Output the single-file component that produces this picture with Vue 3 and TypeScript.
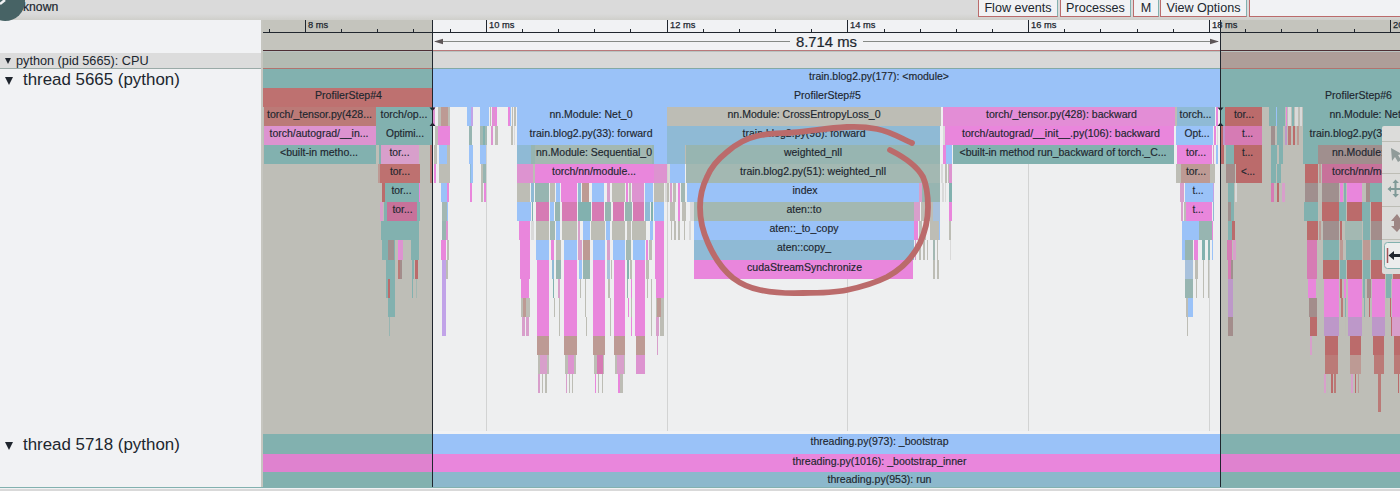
<script setup lang="ts">
interface Bar { x: number; w: number; y: number; h: number; fill: string }
interface Label { x: number; y: number; w: number; text: string }

const palette: Record<string, string> = {
  B: '#9ac2f8', K: '#e986dc', T: '#82b1af', G: '#bdbdb5', R: '#bb6b6b', L: '#d9d9d9', W: '#f1f2f4',
  BT: '#8fbad5', GT: '#a3b8b2', TG: '#97b5b1', KG: '#d89fcb', KR: '#d67bb4', RK: '#c7729a', GR: '#bd9a94',
  RG: '#bb7a77', RT: '#a38d8b', KT: '#bd98c9', KB: '#c1a3e8', PG: '#dd93d0', RD: '#be7170', BG: '#a8c1dc', TR: '#a08f8e', PL: '#e38dd6',
}

const TOP = 69
const ROW = 19.05

// One entry per stack depth: "start end colour" triples.
const depths: string[] = [
  '263 433 T,433 1220 B,1221 1400 T',
  '263 433 RD,433 1220 B,1221 1400 T',
  '264 376 RG,376 432 T,432 435 PG,438 450 G,441 448 GR,467 473 B,471 473 KB,480 489 B,490 491 G,492 497 K,493 495 PG,508 510 K,510 511 B,512 513 G,514 515.5 G,517 667 B,667 941 G,943 1175 PL,1175 1177 G,1177 1215 BT,1216 1218 K,1221 1225 T,1225 1262 R,1269 1285 T,1276 1277 B,1286 1287 K,1288 1291 L,1292 1294 T,1295 1298 L,1300 1302 L,1303 1400 T',
  '264 376 PG,376 432 T,435 438 G,438 450 K,469 472 TG,480 487 GT,483 485 T,491 493 PG,495 497.5 G,511 512.5 G,513.5 515 L,517 667 B,667 940 BT,943 944.5 L,945 1174 K,1176 1213 B,1214 1216 K,1217 1218 L,1221 1223 R,1223 1225 KT,1225 1262 KR,1271 1275 TR,1277 1283 T,1285 1287 KT,1288 1291 RG,1293 1295 R,1297 1299 GR,1303 1400 T',
  '264 376 T,379 381 T,381 419 KG,430 432 RG,434 437 G,439 447 B,447 450 G,469 473 B,480 486 B,517 531 BT,531 654 TG,535 652 GT,654 667 B,667 685 BT,685 686 G,686 940 TG,943 946 K,946 952 B,953 1174 T,1177 1212 K,1213 1214 KG,1216 1218 B,1221 1224 R,1226 1234 T,1234 1262 R,1271 1277 T,1279 1283 T,1303 1318 T,1318 1400 TR',
  '378 380 GR,380 420 RD,430 432 RG,434 436 K,439 450 G,469.5 471 BT,471 473 B,481 483 G,483 486 TG,517 533 PG,533 535 G,535 654 K,654 667 PG,668 670 L,670 685 B,686 940 GT,941 943 L,945 946.5 G,948 949 G,949 952 PG,1176 1215 G,1181 1210 GR,1225.5 1235 RT,1236 1262 R,1271 1276 T,1277 1281 T,1305 1318 R,1319 1321 GR,1322 1400 RK',
  '382 385 R,385 419 T,419 420 K,441 447 B,447 449 K,470 472 K,481 483 G,484 486 K,517 530 G,531 534 BT,535 549 TG,550 555 G,556 560 B,561 577 K,578 581 BT,582 589 GR,592 604 B,607 610 KG,612 625 G,626 628 K,629 631 G,632 644 PG,645 653 B,654 664 G,665 667 L,667 669 G,670 672 KG,673 676 G,678 680 K,681 685 GT,687 919 B,919 922 KG,922 940 TG,942 943.5 L,945 946 L,949 952 T,1180 1184 KG,1185 1213 B,1213 1214 KB,1228 1234 T,1235 1236.5 L,1271 1274 KR,1277 1279 R,1282 1285 KG,1305 1318 TR,1319 1320 G,1322 1339 TR,1340 1343 K,1344 1346 T,1347 1362 K,1366 1370 RT,1370 1400 T',
  '380 383 KG,384 387 T,387 417 RK,417 420 T,442 447 GT,447 448 B,517 531 B,532 533 T,536 549 KR,550 554 B,555 560 TG,562 577 KR,578 591 T,592 604 KR,605 611 TG,613 624 KR,625 632 TG,633 644 KR,645 650 BT,651 653 T,654 664 B,670 675 G,678 680 K,682 686 G,690 694 L,694 914 GT,914 920 KG,921 933 G,933 940 BG,949 952 K,1181 1183 KG,1184 1186 G,1186 1212 K,1213 1214 BT,1228 1231 TR,1231 1234 T,1304 1318 T,1319 1321 G,1322 1339 R,1339 1346 T,1347 1362 R,1362 1370 T,1371 1385 R,1385 1400 T',
  '381 419 T,442 446 TG,446 448 PG,519 530 K,531 534 L,536 549 G,550 555 GT,556 560 B,562 577 G,578 580 KG,583 590 B,591 605 G,606 610 B,612 625 G,627 631 G,632 646 G,650 653 B,655 664 K,671 672 G,674 675.5 G,678 679.5 G,684 685 G,689 691 L,694 914 B,914 918 K,919 922 G,924 926 G,930 939 G,939 940 B,949 950.5 G,1182 1199 B,1199 1212 TG,1212 1213 K,1228 1232 T,1232 1235 R,1307 1318 R,1319 1321 GR,1323 1339 TR,1340 1342 R,1345 1362 GT,1363 1370 T,1371 1384 RT',
  '382 395 T,388 394 TR,398 400 K,400 403 PG,411 419 T,441 446 K,447 449 G,520 530 K,536 549 B,551 554 K,556 561 G,564 577 B,578 582 KG,583 590 GR,593 605 B,607 610 KG,613 625 B,626 631 GT,633 645 B,646 648 K,649 652 G,655 664 K,694 914 BT,915 916 KG,919 921 G,923 924.5 G,927 928 G,933 935 GT,937 938 G,950 951 L,1182 1185 B,1185 1193 TG,1194 1198 K,1202 1205 T,1208 1210 T,1212 1213 B,1227 1232 KR,1233 1236 KG,1307 1317 KR,1323 1339 T,1340 1343 GR,1346 1362 T,1363 1370 GR,1371 1384 T',
  '386 395 T,398 399.5 RG,400 401.5 RT,412 414 T,415 418 R,442 446 KB,446 448 G,520 530 K,537 549 K,552 554 BT,556 561 TG,564 577 K,579 582 B,583 590 TG,593 605 K,607 610 BG,611 612 G,614 625 K,627 629 T,630 632 G,635 645 K,646 649 G,655 664 K,694 913 K,933 934.5 G,937 939 G,1185 1193 BG,1195 1198 G,1203 1204 G,1208 1209 G,1228 1231 KR,1231 1233 TR,1307 1317 KR,1323 1339 R,1340 1346 T,1347 1362 R,1363 1370 T,1371 1385 R,1386 1392 T,1393 1400 R',
  '386 395 T,388 390 R,412 413 T,416 417 GT,442 446 KB,521 529 K,537 549 K,553 554 T,558 560 KG,564 577 K,580 581 G,585 586 G,593 605 K,608 610 G,614 625 K,627 628 TG,631 632 K,635 645 K,647 648 G,651 652 G,656 664 K,1185 1193 TG,1196 1197 G,1203 1204 G,1208 1209 G,1228 1233 KT,1308 1316 K,1324 1339 K,1340 1342 R,1344 1346 K,1348 1362 K,1363 1365 T,1367 1371 RT,1372 1385 K,1386 1391 T,1392 1400 K',
  '388 395 T,442 446 KB,521 530 G,523 526 GR,537 549 K,554 555 G,559 560 G,564 577 K,585 586 G,593 605 K,610 611 G,614 625 K,628 629 K,631 632 G,635 645 K,651 652 G,656 664 G,657 661 GR,1186 1188 G,1188 1193 B,1228 1233 KT,1309 1317 RT,1324 1339 K,1341 1343 RG,1345 1346 T,1348 1362 K,1364 1365 T,1369 1370 R,1372 1385 K,1386 1388 G,1390 1391 R,1392 1400 K',
  '389 390 TG,442 446 KB,522 525 KG,526 529 KG,537 549 K,559 560 G,564 577 K,586 587 G,593 605 K,610 611 G,614 625 K,631 632 K,635 645 K,651 652 G,656 659 KG,660 664 G,1187 1188 G,1228 1233 RT,1310 1317 R,1324 1339 KT,1345 1346 G,1348 1362 KT,1372 1385 KT,1391 1392 R,1392 1400 KG',
  '537 549 GR,564 577 GR,593 605 GR,614 625 GR,636 645 GR,657 658 KG,1310 1312 KG,1325 1338 R,1350 1361 R,1373 1384 R,1394 1400 R',
  '538 549 G,540 547 KG,565 576 G,568 574 PG,594 604 G,597 603 KR,615 625 G,617 624 KG,636 645 PG,1325 1338 RG,1350 1361 GR,1374 1384 RG,1394 1400 RG',
  '538 539.5 KG,542 543 G,545 547 G,566 567 KG,569 570 G,572 573 G,595 596 K,598 599 G,602 603 G,618 620 K,620 623 G,1324 1326 KG,1327 1328 G,1331 1332.5 R,1334 1336 RG,1351 1353 KG,1355 1356 R,1358 1359 GR,1378 1381 RG,1398 1399 R',
  '1378 1381 RG',
]

const bars: Bar[] = depths.flatMap((line, depth) =>
  line.split(',').map((entry) => {
    const [a, b, c] = entry.split(' ')
    const y = Math.round(TOP + depth * ROW)
    return { x: +a, w: +b - +a, y, h: Math.round(TOP + (depth + 1) * ROW) - y, fill: palette[c] }
  }),
)

const label = (x: number, depth: number, w: number, text: string): Label =>
  ({ x, y: Math.round(TOP + depth * ROW) + 11, w, text })

const labels: Label[] = [
  label(879, 0, 140, 'train.blog2.py(177): <module>'),
  label(348.5, 1, 67, 'ProfilerStep#4'),
  label(827.5, 1, 67, 'ProfilerStep#5'),
  label(1358.5, 1, 67, 'ProfilerStep#6'),
  label(319.5, 2, 105, 'torch/_tensor.py(428...'),
  label(404, 2, 47, 'torch/op...'),
  label(591, 2, 83, 'nn.Module: Net_0'),
  label(804, 2, 153, 'nn.Module: CrossEntropyLoss_0'),
  label(1061.5, 2, 151, 'torch/_tensor.py(428): backward'),
  label(1195.5, 2, 32, 'torch...'),
  label(1244, 2, 20, 'tor...'),
  label(1371, 2, 83, 'nn.Module: Net_0'),
  label(319, 3, 99, 'torch/autograd/__in...'),
  label(405, 3, 38, 'Optimi...'),
  label(591, 3, 123, 'train.blog2.py(33): forward'),
  label(804, 3, 123, 'train.blog2.py(98): forward'),
  label(1061, 3, 198, 'torch/autograd/__init__.py(106): backward'),
  label(1197, 3, 25, 'Opt...'),
  label(1247.5, 3, 11, 't...'),
  label(1371, 3, 123, 'train.blog2.py(33): forward'),
  label(319, 4, 78, '<built-in metho...'),
  label(399.5, 4, 20, 'tor...'),
  label(594, 4, 116, 'nn.Module: Sequential_0'),
  label(813, 4, 58, 'weighted_nll'),
  label(1063, 4, 207, '<built-in method run_backward of torch._C...'),
  label(1196, 4, 20, 'tor...'),
  label(1247.5, 4, 11, 't...'),
  label(1390, 4, 116, 'nn.Module: Sequential_0'),
  label(400, 5, 20, 'tor...'),
  label(594, 5, 84, 'torch/nn/module...'),
  label(813, 5, 146, 'train.blog2.py(51): weighted_nll'),
  label(1196, 5, 20, 'tor...'),
  label(1248, 5, 14, '<...'),
  label(1374, 5, 84, 'torch/nn/module...'),
  label(401.5, 6, 20, 'tor...'),
  label(805, 6, 25, 'index'),
  label(1198, 6, 11, 't...'),
  label(402.5, 7, 20, 'tor...'),
  label(804, 7, 35, 'aten::to'),
  label(1198, 7, 11, 't...'),
  label(804, 8, 69, 'aten::_to_copy'),
  label(804, 9, 54, 'aten::copy_'),
  label(804.5, 10, 115, 'cudaStreamSynchronize'),
  { x: 879.5, y: 445, w: 138, text: 'threading.py(973): _bootstrap' },
  { x: 879.5, y: 465, w: 174, text: 'threading.py(1016): _bootstrap_inner' },
  { x: 879.5, y: 483, w: 104, text: 'threading.py(953): run' },
]

const majors = [0, 1, 2, 3, 4, 5, 6].map((i) => ({ x: Math.round(306 + i * 180.8), text: `${8 + i * 2} ms` }))
const minors = Array.from({ length: 31 }, (_, i) => Math.round(269.8 + i * 36.16)).filter(
  (x) => !majors.some((m) => Math.abs(m.x - x) < 4),
)
const buttons = ['Flow events', 'Processes', 'M', 'View Options']
</script>

<template>
  <div class="viewer">
    <header class="topbar">
      <svg class="logo" width="27" height="22" viewBox="0 0 27 22">
        <circle cx="5" cy="1" r="20" fill="#476365" />
        <path d="M0 4L5 0" stroke="#f1f2f4" stroke-width="2.5" />
      </svg>
      <span class="title">known</span>
      <nav class="actions">
        <button v-for="(b, i) in buttons" :key="b" :class="'b' + i">{{ b }}</button>
        <span class="search"></span>
      </nav>
    </header>

    <main class="body">
      <aside class="names">
        <div class="corner"></div>
        <div class="process"><i></i><span>python (pid 5665): CPU</span></div>
        <div class="thread first"><i></i><span>thread 5665 (python)</span></div>
        <div class="thread"><i></i><span>thread 5718 (python)</span></div>
      </aside>

      <svg class="timeline" width="1139" height="468" viewBox="261 20 1139 468">
        <rect x="261" y="20" width="1139" height="468" fill="#f1f2f4" />
        <rect x="261" y="20" width="2" height="468" fill="#c6c6c0" />
        <rect x="263" y="20" width="170" height="32" fill="#c4c4bd" />
        <rect x="1221" y="20" width="179" height="32" fill="#c4c4bd" />

        <rect x="263" y="52" width="170" height="16" fill="#b3bbb3" />
        <rect x="433" y="52" width="788" height="16" fill="#d8d8d7" />
        <rect x="1221" y="52" width="179" height="16" fill="#ae9e99" />

        <rect x="263" y="69" width="170" height="365" fill="#bebeb7" />
        <rect x="433" y="69" width="788" height="362" fill="#eeeff0" />
        <rect x="1221" y="69" width="179" height="365" fill="#bebeb7" />
        <rect v-for="m in majors.slice(1, 6)" :key="m.x" :x="m.x - 1" y="69" width="1" height="362" fill="#d2d3d3" />

        <g shape-rendering="crispEdges">
          <rect v-for="(b, i) in bars" :key="i" :x="b.x" :y="b.y" :width="b.w" :height="b.h" :fill="b.fill" />
          <rect x="263" y="434" width="1137" height="20" fill="#82b1af" />
          <rect x="433" y="434" width="787" height="20" fill="#9ac2f8" />
          <rect x="263" y="454" width="1137" height="18" fill="#df82cf" />
          <rect x="433" y="454" width="787" height="18" fill="#e986dc" />
          <rect x="263" y="472" width="1137" height="15" fill="#82b1af" />
          <rect x="433" y="472" width="787" height="15" fill="#8cb8cc" />
          <rect x="261" y="487" width="1139" height="1" fill="#82b1af" />

          <rect x="263" y="32" width="1137" height="1" fill="#20262e" />
          <rect x="263" y="50" width="170" height="1" fill="#4e2f35" />
          <rect x="433" y="50" width="788" height="1" fill="#b8787a" />
          <rect x="1221" y="50" width="179" height="1" fill="#4e2f35" />
          <rect x="263" y="51" width="1137" height="1" fill="#b9c3c0" />
          <rect x="263" y="68" width="170" height="1" fill="#b0746f" />
          <rect x="433" y="68" width="788" height="1" fill="#82a9a6" />
          <rect x="1221" y="68" width="179" height="1" fill="#b0746f" />
          <rect v-for="x in minors" :key="x" :x="x - 1" y="29" width="1" height="3" fill="#20262e" />
          <rect v-for="m in majors" :key="m.x" :x="m.x - 1" y="20" width="1" height="12" fill="#20262e" />
        </g>
        <text v-for="m in majors" :key="m.text" class="tick" :x="m.x + 2" y="27.5">{{ m.text }}</text>

        <path d="M435 41.5H1218" stroke="#858985" />
        <path d="M434 41.5L443 38.8V44.2ZM1219 41.5L1210 38.8V44.2Z" fill="#5d5657" />
        <rect x="790" y="34" width="73" height="15" fill="#f1f2f4" />
        <text class="span" x="796" y="46.500" textLength="61" lengthAdjust="spacingAndGlyphs">8.714 ms</text>

        <text
          v-for="(l, i) in labels" :key="'l' + i" class="label" :x="l.x - l.w / 2" :y="l.y"
          :textLength="l.w" lengthAdjust="spacingAndGlyphs"
        >{{ l.text }}</text>

        <path
          d="M912 143C902 139 892 132 877 129C867 127 857 126.500 847 127C828 128 811 131 793 132.500C781 133.500 768 133 757 136C744 139 735 145 727 152C717 160 711 167 707 177C702 187 700 197 700 207C700 220 703 232 708 243C714 257 722 269 733 278C741 284 750 288 760 290C774 293 789 293.500 803 293C818 293 833 293 847 290C861 287 875 283 887 277C902 269 913 257 920 243C925 232 928 220 928 207C928 196 927 186 923 177C917 166 904 157 890 150"
          fill="none" stroke="#bb6b6b" stroke-width="5.8" stroke-linecap="round" stroke-linejoin="round"
        />

        <path d="M432.500 20V487M1220.500 20V487" stroke="#20262e" shape-rendering="crispEdges" />
        <path
          d="M429.500 107.500H435.500L432.500 111ZM429.500 126L432.500 122.500L435.500 126ZM1217.500 107.500H1223.500L1220.500 111ZM1217.500 126L1220.500 122.500L1223.500 126Z"
          fill="#20262e"
        />

        <g class="tools">
          <rect x="1382" y="126" width="22" height="148" rx="2" fill="#dcdcda" />
          <path d="M1382 141.500H1400M1382 173.500H1400M1382 206.500H1400M1382 239.500H1400" stroke="#bdbdb5" />
          <path d="M1391 148L1392 161L1395 157L1398 162L1401 160L1398 155L1402 154Z" fill="#909b99" />
          <path d="M1387.500 189L1391 186V188H1394.500V183H1392.500L1395.500 179.500L1399 183H1396.500V188H1402V190H1396.500V194H1399L1395.500 197.500L1392.500 194H1394.500V190H1391V192Z" fill="#7f9997" />
          <path d="M1397 214L1391 221H1394V226H1391L1397 232L1402 226V221Z" fill="#9d8583" />
          <rect x="1384.500" y="242.500" width="22" height="26" rx="3" fill="#eceded" stroke="#82b1af" />
          <path d="M1387.500 248V263" stroke="#a45458" stroke-width="1.500" />
          <path d="M1388.500 255.500L1394 251V254H1400V257H1394V260Z" fill="#20262e" />
        </g>
      </svg>
    </main>
    <footer class="bottom"></footer>
  </div>
</template>

<style scoped>
.viewer {
  width: 1400px;
  height: 491px;
  display: flex;
  flex-direction: column;
  overflow: hidden;
  background: #f1f2f4;
  color: #20262e;
  font-family: "Liberation Sans", Arial, sans-serif;
}
.topbar {
  height: 20px;
  flex: none;
  display: flex;
  background: linear-gradient(#dadada 70%, #cfcfcb);
}
.logo { flex: none; margin-right: -4px; z-index: 1; }
.title { font-size: 12.2px; line-height: 15px; -webkit-text-stroke: 0.2px; }
.actions { margin-left: auto; display: flex; gap: 3px; height: 17px; }
.actions button {
  box-sizing: border-box;
  height: 17px;
  padding: 0;
  border: 1px solid #bb6b6b;
  border-top: 0;
  border-right-color: #82b1af;
  background: #f1f2f4;
  color: #20262e;
  font: 12.6px/15px "Liberation Sans", Arial, sans-serif;
  white-space: nowrap;
}
.actions .b0 { width: 80px; }
.actions .b1 { width: 71px; margin-left: -1px; }
.actions .b2 { width: 26px; margin-left: -1px; }
.actions .b3 { width: 87px; margin-left: -2px; }
.search { box-sizing: border-box; width: 151px; height: 17px; margin-left: -1px; border-left: 1px solid #bb6b6b; border-bottom: 1px solid #bb6b6b; background: #f1f2f4; }
.body { display: flex; height: 468px; flex: none; }
.names { width: 261px; height: 467px; display: flex; flex-direction: column; border-bottom: 1px solid #82b1af; }
.corner { height: 33px; }
.process {
  height: 15px;
  display: flex;
  align-items: center;
  background: #dcdcdc;
  border-bottom: 1px solid #9aaaa7;
  font-size: 12.7px;
}
.process i { margin: 0 5px 0 5px; border: solid transparent; border-width: 6px 3.5px 0; border-top-color: #20262e; }
.thread { height: 20px; display: flex; align-items: center; font-size: 16.9px; }
.thread.first { margin: 1px 0 345px; }
.thread i { margin: 2px 10px 0 5px; border: solid transparent; border-width: 8px 4.5px 0; border-top-color: #20262e; }
.timeline { display: block; flex: none; overflow: visible; }
.label { font-size: 10.4px; fill: #20262e; stroke: #20262e; stroke-width: 0.15px; }
.tick { font-size: 9.3px; fill: #20262e; stroke: #20262e; stroke-width: 0.25px; }
.span { font-size: 14px; fill: #20262e; stroke: #20262e; stroke-width: 0.2px; }
.bottom { height: 3px; background: linear-gradient(#f1f2f4 33%, #d9d9d9 33%); }
</style>

<style>
body { margin: 0; overflow: hidden; }
</style>
